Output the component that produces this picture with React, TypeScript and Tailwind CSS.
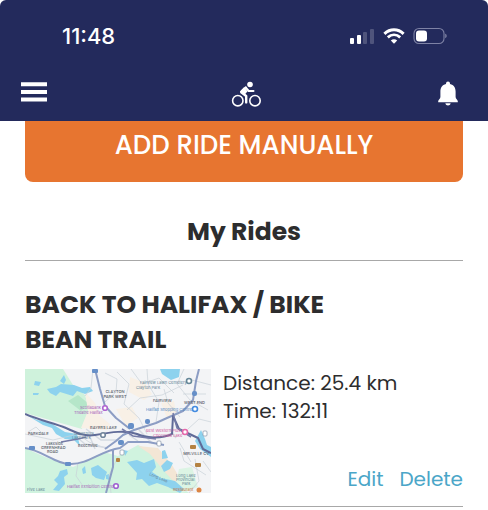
// ─────────────────────────────────────────────
// File: App.tsx
// Purpose: Rides screen with header, add button and saved ride list.
// ─────────────────────────────────────────────

import type { ReactNode } from 'react'

interface Ride {
  title: string
  distance: string
  time: string
}

const rides: Ride[] = [{ title: 'BACK TO HALIFAX / BIKE BEAN TRAIL', distance: '25.4 km', time: '132:11' }]

// ── Status bar ────────────────────────────────

function StatusBar(): ReactNode {
  return (
    <div className="flex items-center justify-between pl-[62px] pr-[41px] pt-6">
      <span className="font-['Inter','Liberation_Sans',sans-serif] text-[22px] leading-6 font-medium">11:48</span>
      <div className="flex items-center gap-2">
        <svg width="26" height="18" viewBox="0 0 26 18" fill="currentColor" aria-hidden="true">
          <rect x="1" y="11" width="4" height="6" rx="1" />
          <rect x="8" y="8" width="4" height="9" rx="1" />
          <rect x="14" y="5" width="4" height="12" rx="1" opacity=".2" />
          <rect x="21" y="2" width="4" height="15" rx="1" opacity=".2" />
        </svg>
        <svg width="22" height="18" viewBox="0 0 22 18" fill="none" stroke="currentColor" aria-hidden="true">
          <path d="M1.4 6.8C7 1.5 15 1.5 20.6 6.8" strokeWidth="3" />
          <path d="M4.8 10.4C8.5 7 13.5 7 17.2 10.4" strokeWidth="2.8" />
          <path d="M7.8 13.6C9.7 11.9 12.3 11.9 14.2 13.6L11 16.8Z" fill="currentColor" stroke="none" />
        </svg>
        <svg width="34" height="18" viewBox="0 0 34 18" aria-hidden="true">
          <rect x="1" y="1.5" width="30" height="15" rx="5" fill="none" stroke="#7e82a5" strokeWidth="1.1" />
          <rect x="3" y="3.5" width="11" height="11" rx="3" fill="currentColor" />
          <path d="M32.3 6.8c1.7.6 1.7 3.8 0 4.4z" fill="#8d90af" />
        </svg>
      </div>
    </div>
  )
}

// ── Header ────────────────────────────────────

function Header(): ReactNode {
  return (
    <header className="bg-[#232a5c] text-white rounded-t-md pb-[11px]">
      <StatusBar />
      <div className="flex items-center justify-between px-5 pt-[30px]">
        <button type="button" aria-label="Menu" className="flex w-8 h-8">
          <svg width="28" height="32" viewBox="0 0 28 32" fill="currentColor" aria-hidden="true">
            <path d="M1 4.3h26v4H1zM1 12h26v4H1zM1 19.6h26v4H1z" />
          </svg>
        </button>
        <svg width="36" height="32" viewBox="-4 0 36 32" fill="none" stroke="currentColor" aria-hidden="true">
          <circle cx="7.8" cy="22.7" r="5.2" strokeWidth="1.6" />
          <circle cx="25" cy="22.7" r="5.2" strokeWidth="1.6" />
          <g transform="translate(-.8 0)">
            <circle cx="20.8" cy="6.5" r="2.8" fill="currentColor" stroke="none" />
            <path d="M16.5 9.7 12 14.2 17 18v6.4" strokeWidth="2.4" strokeLinecap="round" strokeLinejoin="round" />
            <path d="M16.5 9.5 19.5 13h4.8" strokeWidth="2" strokeLinecap="round" strokeLinejoin="round" />
            <path d="M14.8 9.3 10.7 13.6 15.4 16.8 18.4 13.2Z" fill="currentColor" stroke="none" />
          </g>
        </svg>
        <button type="button" aria-label="Notifications" className="flex w-8 h-8">
          <svg width="24" height="32" viewBox="0 0 24 32" fill="currentColor" aria-hidden="true">
            <path d="M10 6V5.4a2 2 0 0 1 4 0V6c4 .9 5.6 4 5.6 7.4v5.7c0 1.7 2.2 3.2 2.2 4.1v1H2.2v-1c0-.9 2.2-2.4 2.2-4.1v-5.7C4.4 10 6 6.9 10 6z" />
            <path d="M9.4 25.2h5.2c-.3 2.9-4.9 2.9-5.2 0z" />
          </svg>
        </button>
      </div>
    </header>
  )
}

// ── Route map ─────────────────────────────────

function RouteMap(): ReactNode {
  return (
    <svg
      role="img"
      aria-label="Map of the ride route"
      viewBox="0 0 186 124"
      className="w-[186px] h-[124px] shrink-0 font-['Inter','Liberation_Sans',sans-serif]"
    >
      <rect width="186" height="124" fill="#f3f4f6" />
      {/* parks and built-up areas */}
      <path d="M0 0H38L48 16 60 26 64 40 57 60 0 44Z" fill="#cff2dc" />
      <path d="M43 32 53 26 64 35 56 42Z" fill="#b5e6c9" />
      <path d="M60 23 70 34 75 47 85 55 82 61 56 59 63 42ZM105 8 120 14 127 25 119 31 104 23ZM91 40 107 38 113 49 101 57ZM136 34 149 32 151 44 142 49Z" fill="#f8f0e6" />
      <path d="M0 79 20 88 48 98 79 83 93 87 113 76 129 83 142 98 149 112 164 124H0Z" fill="#d0f3df" />
      <path d="M113 77 133 79 147 96 156 111 151 115 139 102 125 85Z" fill="#f3e6d5" />
      <path d="M154 100 167 98 173 118 157 124 151 113Z" fill="#dcf4e4" />
      {/* water */}
      <g fill="#8dd2ee">
        <path d="M22 20 31 18 36 15 49 16 57 19 65 18 68 22 60 25 52 22 48 27 35 23 31 27 25 24ZM35 12 39 6 41 11 39 15ZM10 12 16 13 14 17 9 16ZM8 24 14 24 13 26 8 26Z" />
        <path d="M0 45 12 51 24 53 40 63 52 65 55 77 49 71 40 70 31 65 27 59 18 56Z" />
        <path d="M135 0H155L154 8 146 11 137 5ZM176 61 180 70 182 76 186 78V88L175 80 170 72Z" />
        <path d="M35 102 42 100 43 105 39 108 40 115 34 122 28 121 33 115 29 111 33 107ZM66 99 73 96 78 100 82 103 79 111 71 109 67 106ZM57 100 60 97 61 104 58 105ZM81 106 84 105 85 111 81 110Z" />
        <path d="M102 93 112 91 119 94 129 90 131 98 127 103 136 109 150 112 159 120 155 124 143 118 132 114 124 117 117 110 111 111 112 104ZM136 97 142 91 148 94 145 100 139 103ZM137 82 140 81 143 89 137 90ZM99 81 103 82 100 87Z" />
      </g>
      {/* local streets */}
      <path d="M0 65 28 71 53 65 64 73 80 79M68 0 66 19 60 27M80 4 92 10 91 23 80 33M92 3 104 15 99 35 114 49 122 65M106 0 117 15 134 9 149 24M102 41 115 29 137 26 158 16M122 0 123 15 134 33 131 53M139 20 143 34 155 48M159 0 152 15 165 31 183 41M158 25 181 25M163 10 186 16M163 60 174 50 186 53M155 79 159 92 181 106M170 90 174 112 164 124M178 92 186 103M154 73 166 93M53 94 51 107 58 117M93 88 84 106 86 124M3 63 11 58 17 64" fill="none" stroke="#c9d1d9" strokeWidth=".7" />
      <path d="M54 70 60 75 83 79M61 60 76 71 92 71M65 68 70 80M114 61 127 74M104 66 113 72M145 60 151 69" fill="none" stroke="#d5dae2" strokeWidth="1.5" />
      {/* highways */}
      <g fill="none" stroke="#8c9dc4" strokeWidth="2" strokeLinejoin="round">
        <path d="M0 79C17 81 32 96 46 95C64 95 75 82 95 79L103 73 123 73 139 76M70 0 75 20 80 37 91 49 105 60M80 80 91 72 98 66 109 61 131 54 142 49 158 42 168 31 171 12 174 0M88 81 88 98 81 124" />
      </g>
      {/* recorded ride */}
      <path d="M0 45C13 51 29 54 41 59C50 63 58 68 70 66C87 63 100 61 112 65C120 69 137 70 147 65L148 47 154 60 173 69 178 80 186 84" fill="none" stroke="#606b98" strokeWidth="2" strokeLinejoin="round" />
      <path d="M148 44 152 59 166 68M97 60 108 67 131 70M36 73 53 70 61 68" fill="none" stroke="#747ba8" strokeWidth="1.5" />
      {/* markers */}
      <g fill="#668fc8">
        <rect x="67" y="0" width="6" height="4" rx="1" />
        <rect x="4" y="77" width="6" height="4" rx="1" />
        <rect x="40" y="93" width="6" height="4" rx="1" />
        <rect x="120" y="50" width="5" height="5" rx="2" />
        <rect x="103" y="54" width="6" height="6" rx="2" />
        <rect x="167" y="22" width="5" height="5" rx="2" />
        <rect x="93" y="71" width="6" height="5" rx="2" />
      </g>
      <g fill="white" strokeWidth="1.6">
        <circle cx="80" cy="39" r="2.3" stroke="#ae65d0" />
        <circle cx="164" cy="12" r="2.5" stroke="#668798" />
        <circle cx="170" cy="40" r="2.5" stroke="#438be0" />
        <circle cx="160" cy="63" r="2.5" stroke="#e568ab" />
        <circle cx="78" cy="66" r="2.3" stroke="#71869c" />
        <circle cx="91" cy="117" r="2.3" stroke="#9e61d0" />
      </g>
      <g fill="#b48242">
        <rect x="165" y="76" width="6" height="4" rx="1" />
        <rect x="170" y="94" width="6" height="4" rx="1" />
        <rect x="91" y="89" width="4" height="4" rx="1" />
        <circle cx="174" cy="121" r="2.5" fill="#dc8544" />
      </g>
      <g fill="white" stroke="#74849a" strokeWidth=".6">
        <rect x="132" y="72" width="4" height="5" rx="1" />
        <rect x="178" y="62" width="4" height="5" rx="1" />
        <rect x="95" y="81" width="4" height="5" rx="1" />
      </g>
      {/* place names */}
      <g fontSize="4" fill="#59616c" fontWeight="500">
        <text x="90" y="24" textAnchor="middle">CLAYTON</text>
        <text x="90" y="29" textAnchor="middle">PARK WEST</text>
        <text x="128" y="33">FAIRVIEW</text>
        <text x="159" y="35">WEST END</text>
        <text x="65" y="60">BAYERS LAKE</text>
        <text x="3" y="66">PARKDALE</text>
        <text x="21" y="76">Lakeside</text>
        <text x="16" y="80">GREENHEAD</text>
        <text x="22" y="84">ROAD</text>
        <text x="53" y="78">Beechville</text>
        <text x="184" y="86" textAnchor="end">MELVILLE CV</text>
      </g>
      <g fontSize="4" fill="#658496">
        <text x="115" y="15">Fairview Lawn Cemetery</text>
        <text x="111" y="20">Clayton Park</text>
        <text x="49" y="66">Governors</text>
        <text x="47" y="70">Lake Park</text>
        <text transform="translate(124 106) rotate(23)">Long Lake</text>
        <text x="151" y="108">Long Lake</text>
        <text x="151" y="112">Provincial</text>
        <text x="157" y="116">Park</text>
        <text x="2" y="122">Five Lake</text>
      </g>
      <g fontSize="4" fill="#a55bb7">
        <text x="55" y="40">Scotiabank</text>
        <text x="49" y="45">Theatre Halifax</text>
        <text x="42" y="119">Halifax Exhibition Centre</text>
        <text x="121" y="63" fill="#d15b9e">Best Western Plus</text>
        <text x="128" y="68" fill="#d15b9e">Chocolate Lake</text>
      </g>
      <text x="121" y="42" fontSize="4" fill="#4c83be">Halifax Shopping Centre</text>
      <text x="148" y="122" fontSize="4" fill="#c87442">Restaurant</text>
    </svg>
  )
}

// ── Ride card ─────────────────────────────────

function RideCard({ ride }: { ride: Ride }): ReactNode {
  return (
    <article className="border-b border-[#a8a8a8] pt-[26px] pb-[13px]">
      <h2 className="max-w-[360px] text-[25px] leading-[35px] font-bold">{ride.title}</h2>
      <div className="flex gap-3 pt-3">
        <RouteMap />
        <div className="flex flex-1 flex-col justify-between text-[20px] leading-7">
          <div>
            <p>Distance: {ride.distance}</p>
            <p>Time: {ride.time}</p>
          </div>
          <div className="flex justify-end gap-4 text-[#4ba6c8]">
            <button type="button">Edit</button>
            <button type="button">Delete</button>
          </div>
        </div>
      </div>
    </article>
  )
}

// ── Main export ───────────────────────────────

export default function App(): ReactNode {
  return (
    <div className="bg-white text-[#2d2d2e] font-['Poppins','Inter','Liberation_Sans',sans-serif]">
      <Header />
      <main className="px-[25px]">
        <button
          type="button"
          className="w-full rounded-b-lg bg-[#e77530] pt-[7px] pb-[19px] text-[26px] leading-[35px] font-medium text-white"
        >
          ADD RIDE MANUALLY
        </button>
        <h1 className="border-b border-[#a8a8a8] pt-8 pb-[11px] text-center text-[25px] leading-[35px] font-bold">
          My Rides
        </h1>
        {rides.map((ride) => (
          <RideCard key={ride.title} ride={ride} />
        ))}
      </main>
    </div>
  )
}
